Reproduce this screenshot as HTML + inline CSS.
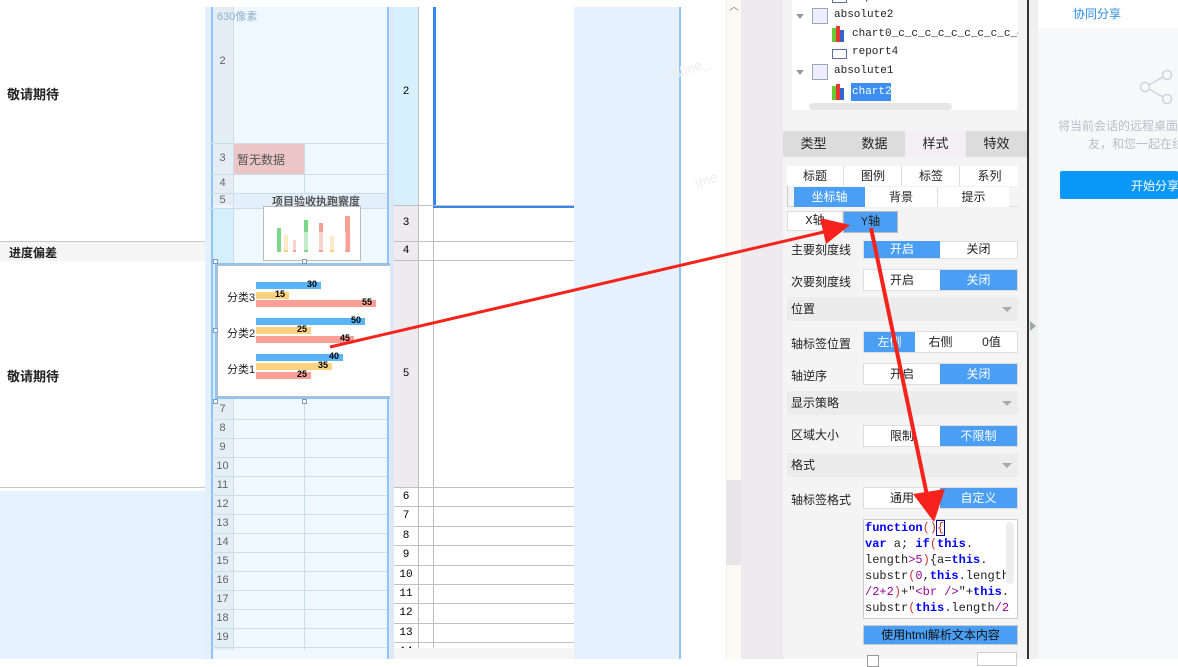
<!DOCTYPE html>
<html><head><meta charset="utf-8"><style>
*{margin:0;padding:0;box-sizing:border-box}
body{width:1178px;height:659px;overflow:hidden;position:relative;background:#fff;font-family:"Liberation Sans","Noto Sans CJK SC",sans-serif;font-size:12px;color:#222}
.a{position:absolute}
.hl{position:absolute;height:1px}
.vl{position:absolute;width:1px}
.rn{position:absolute;font-size:11px;color:#666;text-align:center}
.rn2{position:absolute;font-size:11px;color:#000;text-align:center;font-family:"Liberation Mono",monospace}
.btn{position:absolute;text-align:center;font-size:12px;line-height:20px}
.on{background:#4a9ff5;color:#fff}
.lab{position:absolute;font-size:12px;color:#222}
.hdr{position:absolute;left:787px;width:231px;height:24px;background:#ececec;line-height:24px;padding-left:4px;font-size:12px}
.hdr:after{content:"";position:absolute;right:6px;top:10px;border:5px solid transparent;border-top:5px solid #aaa}
.mono{font-family:"Liberation Mono","Noto Sans CJK SC",monospace}
</style></head><body>

<!-- left panel -->
<div class="a" style="left:0;top:0;width:205px;height:659px;background:#fff"></div>
<div class="a" style="left:7px;top:84px;font-weight:bold;font-size:13px">敬请期待</div>
<div class="hl" style="left:0;top:241px;width:205px;background:#c8c8c8"></div>
<div class="a" style="left:0;top:242px;width:205px;height:19px;background:#f5f5f5"></div>
<div class="a" style="left:9px;top:244px;font-weight:bold;font-size:12px">进度偏差</div>
<div class="a" style="left:7px;top:366px;font-weight:bold;font-size:13px">敬请期待</div>
<div class="hl" style="left:0;top:487px;width:205px;background:#c8c8c8"></div>
<div class="a" style="left:0;top:491px;width:205px;height:168px;background:#e6f2fd"></div>

<!-- column 1 report -->
<div class="a" style="left:205px;top:0;width:185px;height:659px;background:#e4f0fb"></div>
<div class="a" style="left:205px;top:0;width:370px;height:7px;background:#fff"></div>
<div class="a" style="left:212px;top:7px;width:176px;height:652px;background:#eef8fe"></div>
<div class="a" style="left:212px;top:7px;width:21px;height:198px;background:#e4edf4"></div>
<div class="a" style="left:212px;top:208px;width:21px;height:192px;background:#d6effc"></div>
<div class="a" style="left:212px;top:400px;width:21px;height:250px;background:#e4eef5"></div>
<div class="vl" style="left:211px;top:7px;height:652px;width:2px;background:#90c4f8"></div>
<div class="vl" style="left:387px;top:7px;height:652px;width:2px;background:#90c4f8"></div>
<div class="vl" style="left:233px;top:7px;height:643px;background:#cbdde8"></div>
<div class="vl" style="left:304px;top:143px;height:50px;background:#cbdde8"></div>
<div class="vl" style="left:304px;top:400px;height:250px;background:#cbdde8"></div>
<div class="a" style="left:217px;top:8px;font-size:11px;color:#8fb0cc">630像素</div>
<div class="rn" style="left:212px;top:55px;width:21px">2</div>
<div class="hl" style="left:209px;top:143px;width:178px;background:#cbdde8"></div>
<div class="a" style="left:234px;top:144px;width:70px;height:30px;background:#ecc6c6"></div>
<div class="a" style="left:237px;top:151px;font-size:12px;color:#555">暂无数据</div>
<div class="rn" style="left:212px;top:152px;width:21px">3</div>
<div class="hl" style="left:209px;top:174px;width:178px;background:#cbdde8"></div>
<div class="rn" style="left:212px;top:177px;width:21px">4</div>
<div class="hl" style="left:209px;top:193px;width:178px;background:#cbdde8"></div>
<div class="a" style="left:234px;top:194px;width:153px;height:14px;background:#e3f0fb"></div>
<div class="rn" style="left:212px;top:194px;width:21px">5</div>
<div class="a" style="left:272px;top:193px;font-size:11px;font-weight:bold;color:#555">项目验收执跑察度</div>
<div class="hl" style="left:209px;top:208px;width:178px;background:#cbdde8"></div>
<!-- thumbnail chart -->
<div class="a" style="left:263px;top:206px;width:98px;height:55px;background:#fff;border:1px solid #bbb"></div>
<div class="a" style="left:277px;top:228px;width:4px;height:24px;background:#7dd68a"></div>
<div class="a" style="left:284px;top:235px;width:4px;height:17px;background:#fdd27e"></div>
<div class="a" style="left:293px;top:240px;width:3px;height:12px;background:#f99f95"></div>
<div class="a" style="left:304px;top:220px;width:4px;height:32px;background:#7dd68a"></div>
<div class="a" style="left:319px;top:223px;width:4px;height:29px;background:#f99f95"></div>
<div class="a" style="left:345px;top:216px;width:5px;height:36px;background:#f99f95"></div>
<div class="a" style="left:330px;top:236px;width:4px;height:16px;background:#fdd27e"></div>
<div class="a" style="left:284px;top:232px;width:62px;height:18px;background:rgba(255,255,255,.55)"></div>
<!-- rows 7-19 -->
<div id="rows1"></div>

<!-- main chart -->
<div class="a" style="left:215px;top:263px;width:179px;height:136px;background:#fff;border:2px solid #90c4f8"></div>
<div class="a" style="left:217px;top:265px;width:175px;height:132px;border:1px solid #bbb"></div>
<div class="a" style="left:213px;top:259px;width:5px;height:5px;border:1px solid #7a9cc0;background:#fff"></div>
<div class="a" style="left:302px;top:259px;width:5px;height:5px;border:1px solid #7a9cc0;background:#fff"></div>
<div class="a" style="left:394px;top:259px;width:5px;height:5px;border:1px solid #7a9cc0;background:#fff"></div>
<div class="a" style="left:213px;top:328px;width:5px;height:5px;border:1px solid #7a9cc0;background:#fff"></div>
<div class="a" style="left:394px;top:328px;width:5px;height:5px;border:1px solid #7a9cc0;background:#fff"></div>
<div class="a" style="left:213px;top:399px;width:5px;height:5px;border:1px solid #7a9cc0;background:#fff"></div>
<div class="a" style="left:302px;top:399px;width:5px;height:5px;border:1px solid #7a9cc0;background:#fff"></div>
<div class="a" style="left:394px;top:399px;width:5px;height:5px;border:1px solid #7a9cc0;background:#fff"></div>
<div class="a" style="left:227px;top:289px;font-size:11px">分类3</div>
<div class="a" style="left:227px;top:325px;font-size:11px">分类2</div>
<div class="a" style="left:227px;top:361px;font-size:11px">分类1</div>
<div id="bars"></div>

<!-- column 2 report -->
<div class="a" style="left:390px;top:7px;width:4px;height:652px;background:#dce8f6"></div>
<div class="a" style="left:394px;top:7px;width:24px;height:198px;background:#d6f0fc"></div>
<div class="a" style="left:394px;top:205px;width:24px;height:282px;background:#efeaee"></div>
<div class="a" style="left:394px;top:487px;width:24px;height:161px;background:#fff"></div>
<div class="vl" style="left:418px;top:7px;height:641px;background:#c0c0c0"></div>
<div class="vl" style="left:433px;top:205px;height:443px;background:#c0c0c0"></div>
<div class="a" style="left:433px;top:7px;width:141px;height:201px;border-left:3px solid #3a86f0;border-bottom:3px solid #3a86f0"></div>
<div class="rn2" style="left:394px;top:86px;width:24px">2</div>
<div class="hl" style="left:394px;top:205px;width:180px;background:#c0c0c0"></div>
<div class="rn2" style="left:394px;top:217px;width:24px">3</div>
<div class="hl" style="left:394px;top:241px;width:180px;background:#c0c0c0"></div>
<div class="rn2" style="left:394px;top:245px;width:24px">4</div>
<div class="hl" style="left:394px;top:260px;width:180px;background:#c0c0c0"></div>
<div class="rn2" style="left:394px;top:368px;width:24px">5</div>
<div id="rows2"></div>
<div class="a" style="left:394px;top:648px;width:180px;height:11px;background:#f5f5f5"></div>

<div class="a" style="left:574px;top:7px;width:106px;height:652px;background:#e5f1fd"></div>
<div class="vl" style="left:679px;top:7px;height:652px;width:2px;background:#90c4f8"></div>
<div class="a" style="left:660px;top:62px;font-size:14px;color:#eee;transform:rotate(-20deg)">= $fine_</div>
<div class="a" style="left:695px;top:172px;font-size:14px;color:#eee;transform:rotate(-20deg)">ime</div>
<div class="a" style="left:726px;top:0;width:15px;height:659px;background:#fdfaf6;border-left:1px solid #eee"></div>
<div class="a" style="left:726px;top:480px;width:15px;height:85px;background:#e8e4e8"></div>
<div class="a" style="left:729px;top:-2px;font-size:10px;color:#777">︿</div>
<div class="a" style="left:741px;top:0;width:42px;height:659px;background:#eeeaee"></div>

<!-- right config panel -->
<div class="a" style="left:783px;top:0;width:245px;height:659px;background:#f4f4f4"></div>
<div class="a" style="left:792px;top:0;width:226px;height:110px;background:#fff"></div>
<div class="a" style="left:809px;top:103px;width:143px;height:7px;background:#e6e6e6;border-radius:4px"></div>
<div class="a mono" style="left:832px;top:-7px;font-size:11px;border:1px solid #5a70a0;width:15px;height:10px"></div>
<div class="a mono" style="left:852px;top:-9px;font-size:11px">report3</div>
<div class="a" style="left:796px;top:14px;border:4px solid transparent;border-top:5px solid #999"></div>
<div class="a" style="left:812px;top:8px;width:16px;height:16px;border:1px solid #9ab;background:#eef"></div>
<div class="a mono" style="left:834px;top:9px;font-size:11px">absolute2</div>
<div class="a" style="left:832px;top:28px;width:4px;height:14px;background:#6c3;"></div>
<div class="a" style="left:836px;top:26px;width:4px;height:16px;background:#e33"></div>
<div class="a" style="left:840px;top:30px;width:4px;height:12px;background:#36c"></div>
<div class="a mono" style="left:852px;top:28px;font-size:11px;white-space:nowrap;width:166px;overflow:hidden">chart0_c_c_c_c_c_c_c_c_c_c_c</div>
<div class="a" style="left:832px;top:49px;width:15px;height:10px;border:1px solid #5a70a0"></div>
<div class="a mono" style="left:852px;top:46px;font-size:11px">report4</div>
<div class="a" style="left:796px;top:70px;border:4px solid transparent;border-top:5px solid #999"></div>
<div class="a" style="left:812px;top:64px;width:16px;height:16px;border:1px solid #9ab;background:#eef"></div>
<div class="a mono" style="left:834px;top:65px;font-size:11px">absolute1</div>
<div class="a" style="left:832px;top:86px;width:4px;height:14px;background:#6c3"></div>
<div class="a" style="left:836px;top:84px;width:4px;height:16px;background:#e33"></div>
<div class="a" style="left:840px;top:88px;width:4px;height:12px;background:#36c"></div>
<div class="a mono" style="left:851px;top:83px;width:40px;height:18px;background:#3d8ef0;color:#fff;font-size:11px;line-height:18px;padding-left:1px">chart2</div>

<div class="a" style="left:783px;top:131px;width:246px;height:26px;background:#dcdcdc"></div>
<div class="a" style="left:905px;top:131px;width:61px;height:26px;background:#f3eff3"></div>
<div class="btn" style="left:783px;top:134px;width:61px;font-size:13px">类型</div>
<div class="btn" style="left:844px;top:134px;width:61px;font-size:13px">数据</div>
<div class="btn" style="left:905px;top:134px;width:61px;font-size:13px">样式</div>
<div class="btn" style="left:966px;top:134px;width:61px;font-size:13px">特效</div>

<div class="a" style="left:787px;top:166px;width:231px;height:20px;background:#fff"></div>
<div class="btn" style="left:787px;top:166px;width:57px;border-right:1px solid #ddd">标题</div>
<div class="btn" style="left:845px;top:166px;width:57px;border-right:1px solid #ddd">图例</div>
<div class="btn" style="left:903px;top:166px;width:57px;border-right:1px solid #ddd">标签</div>
<div class="btn" style="left:961px;top:166px;width:57px">系列</div>
<div class="a" style="left:787px;top:186px;width:231px;height:21px;border-left:1px solid #ccc;border-bottom:1px solid #ddd"></div>
<div class="btn on" style="left:794px;top:187px;width:71px">坐标轴</div>
<div class="btn" style="left:865px;top:187px;width:72px;background:#fff">背景</div>
<div class="btn" style="left:937px;top:187px;width:72px;background:#fff;border-left:1px solid #ddd">提示</div>

<div class="btn" style="left:787px;top:211px;width:56px;background:#fff;border:1px solid #ddd;line-height:18px;font-family:'Liberation Mono','Noto Sans CJK SC',monospace">X轴</div>
<div class="btn on" style="left:843px;top:211px;width:55px;line-height:20px;border:1px solid #bbb;font-family:'Liberation Mono','Noto Sans CJK SC',monospace;color:#222">Y轴</div>

<div class="lab" style="left:791px;top:241px">主要刻度线</div>
<div class="a" style="left:863px;top:241px;width:155px;height:18px;background:#fff;border:1px solid #ddd"></div>
<div class="btn on" style="left:864px;top:241px;width:76px;line-height:17px">开启</div>
<div class="btn" style="left:940px;top:241px;width:77px;line-height:17px">关闭</div>

<div class="lab" style="left:791px;top:273px">次要刻度线</div>
<div class="a" style="left:863px;top:269px;width:155px;height:22px;background:#fff;border:1px solid #ddd"></div>
<div class="btn" style="left:864px;top:270px;width:76px">开启</div>
<div class="btn on" style="left:940px;top:270px;width:77px">关闭</div>

<div class="hdr" style="top:297px">位置</div>

<div class="lab" style="left:791px;top:335px">轴标签位置</div>
<div class="a" style="left:863px;top:331px;width:155px;height:22px;background:#fff;border:1px solid #ddd"></div>
<div class="btn on" style="left:864px;top:332px;width:51px">左侧</div>
<div class="btn" style="left:915px;top:332px;width:51px">右侧</div>
<div class="btn" style="left:966px;top:332px;width:51px">0值</div>

<div class="lab" style="left:791px;top:367px">轴逆序</div>
<div class="a" style="left:863px;top:363px;width:155px;height:22px;background:#fff;border:1px solid #ddd"></div>
<div class="btn" style="left:864px;top:364px;width:76px">开启</div>
<div class="btn on" style="left:940px;top:364px;width:77px">关闭</div>

<div class="hdr" style="top:391px">显示策略</div>

<div class="lab" style="left:791px;top:426px">区域大小</div>
<div class="a" style="left:863px;top:425px;width:155px;height:22px;background:#fff;border:1px solid #ddd"></div>
<div class="btn" style="left:864px;top:426px;width:76px">限制</div>
<div class="btn on" style="left:940px;top:426px;width:77px">不限制</div>

<div class="hdr" style="top:453px">格式</div>

<div class="lab" style="left:791px;top:491px">轴标签格式</div>
<div class="a" style="left:863px;top:487px;width:155px;height:22px;background:#fff;border:1px solid #ddd"></div>
<div class="btn" style="left:864px;top:488px;width:76px">通用</div>
<div class="btn on" style="left:940px;top:488px;width:77px">自定义</div>

<div class="a mono" style="left:863px;top:519px;width:155px;height:100px;background:#fff;border:1px solid #ccc;overflow:hidden;font-size:12px;line-height:16px;padding:0 0 0 1px;white-space:pre;color:#222"><b style="color:#00f">function</b><span style="color:#c33">()</span><span style="color:#c33;outline:1px solid #008">{</span>
<b style="color:#00f">var</b> a; <b style="color:#00f">if</b><span style="color:#c33">(</span><b style="color:#00f">this</b>.
length<span style="color:#909">&gt;5</span><span style="color:#c33">)</span>{a=<b style="color:#00f">this</b>.
substr<span style="color:#c33">(</span><span style="color:#909">0</span>,<b style="color:#00f">this</b>.length
<span style="color:#909">/2+2</span><span style="color:#c33">)</span>+"<span style="color:#909">&lt;br /&gt;</span>"+<b style="color:#00f">this</b>.
substr<span style="color:#c33">(</span><b style="color:#00f">this</b>.length<span style="color:#909">/2</span></div>
<div class="a" style="left:1006px;top:522px;width:8px;height:62px;background:#eee;border-radius:4px"></div>
<div class="btn on" style="left:863px;top:625px;width:155px;height:20px;color:#111;border:1px solid #ccc;line-height:18px">使用html解析文本内容</div>
<div class="a" style="left:867px;top:655px;width:12px;height:12px;border:1px solid #999;background:#fff"></div>
<div class="a" style="left:977px;top:652px;width:40px;height:14px;border:1px solid #ccc;background:#fff"></div>

<!-- far right -->
<div class="a" style="left:1027px;top:0;width:2px;height:659px;background:#333"></div>
<div class="a" style="left:1029px;top:0;width:9px;height:659px;background:#f0f0f0"></div>
<div class="a" style="left:1030px;top:321px;border:5px solid transparent;border-left:6px solid #9aa;"></div>
<div class="a" style="left:1038px;top:0;width:140px;height:659px;background:#f7f8fa"></div>
<div class="a" style="left:1038px;top:0;width:140px;height:28px;background:#fff"></div>
<div class="a" style="left:1073px;top:5px;color:#2b8ce8;font-size:12px">协同分享</div>
<svg class="a" style="left:1136px;top:68px" width="42" height="40"><g fill="none" stroke="#cfd4da" stroke-width="1.5"><circle cx="31" cy="7" r="4.5"/><circle cx="9" cy="19" r="4.5"/><circle cx="31" cy="31" r="4.5"/><path d="M13 17 27 9M13 21 27 29"/></g></svg>
<div class="a" style="left:1058px;top:117px;color:#b9bec6;font-size:12px;white-space:nowrap">将当前会话的远程桌面</div>
<div class="a" style="left:1088px;top:135px;color:#b9bec6;font-size:12px;white-space:nowrap">友，和您一起在线</div>
<div class="a" style="left:1060px;top:171px;width:118px;height:28px;background:#0a98f8;border-radius:2px"></div>
<div class="a" style="left:1131px;top:177px;color:#fff;font-size:12px;white-space:nowrap">开始分享</div>

<!-- arrows -->
<svg class="a" style="left:0;top:0" width="1178" height="659">
<g fill="#f5231b" stroke="#f5231b">
<path d="M330 347 L828 231" stroke-width="3" fill="none"/>
<polygon points="850,225 820,218 826,244" stroke="none"/>
<path d="M871 228 L928 500" stroke-width="4" fill="none"/>
<polygon points="934,522 913,494 945,489" stroke="none"/>
</g>
</svg>

<script>
var r1='',i;
for(i=7;i<=19;i++){var y=400+(i-7)*19;
r1+='<div class="hl" style="left:212px;top:'+(y+19)+'px;width:175px;background:#cbdde8"></div><div class="rn" style="left:212px;top:'+(y+3)+'px;width:21px">'+i+'</div>';}
document.getElementById('rows1').innerHTML=r1;
var r2='';
for(i=6;i<=14;i++){var y=487+(i-6)*19.4;
r2+='<div class="hl" style="left:394px;top:'+Math.round(y)+'px;width:180px;background:#c0c0c0"></div><div class="rn2" style="left:394px;top:'+Math.round(y+4)+'px;width:24px">'+i+'</div>';}
document.getElementById('rows2').innerHTML=r2;
var b=[[282,30,'#5ab4f8'],[292,15,'#fdd27e'],[300,55,'#f99f95'],[318,50,'#5ab4f8'],[327,25,'#fdd27e'],[336,45,'#f99f95'],[354,40,'#5ab4f8'],[363,35,'#fdd27e'],[372,25,'#f99f95']];
var h='';
b.forEach(function(a){var w=Math.round(a[1]*2.18);
h+='<div class="a" style="left:256px;top:'+a[0]+'px;width:'+w+'px;height:7px;background:'+a[2]+'"></div><div class="a" style="left:'+(256+w-14)+'px;top:'+(a[0]-3)+'px;font-size:9px;font-weight:bold;color:#000">'+a[1]+'</div>';});
document.getElementById('bars').innerHTML=h;
</script>
</body></html>
